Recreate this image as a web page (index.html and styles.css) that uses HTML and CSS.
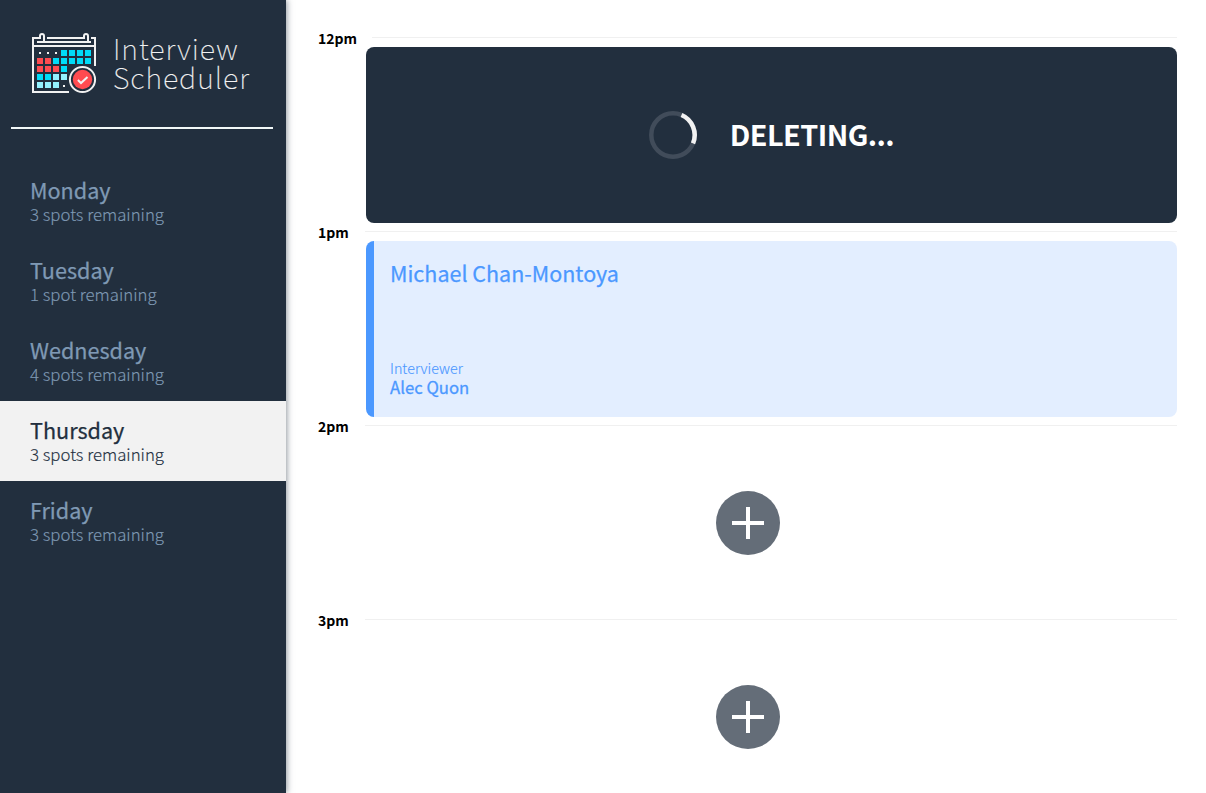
FILE: index.html
```
<!DOCTYPE html>
<html lang="en">
<head>
<meta charset="utf-8">
<title>Interview Scheduler</title>
<link rel="stylesheet" href="styles.css">
</head>
<body>
<div class="layout">
  <aside class="sidebar">
    <div class="brand">
      <svg class="brand-icon" width="70" height="66" viewBox="0 0 70 66">
        <g fill="none" stroke="#f2f2f2" stroke-width="2">
          <path d="M39 61H3V7H10M17 7H54M61 7H65V35M3 15H65M7 11H61"/>
          <path d="M10 8V5a2 2 0 0 1 4 0V11M54 8V5a2 2 0 0 1 4 0V11"/>
        </g>
        <path fill="#f2f2f2" d="M9 21h2v2H9zM17 21h2v2h-2zM25 21h2v2h-2zM33 54h2v2h-2z"/>
        <path fill="#00dcf8" d="M31 19h6v6h-6zM39 19h6v6h-6zM47 19h6v6h-6zM55 19h6v6h-6zM23 27h6v6h-6zM31 27h6v6h-6zM39 27h6v6h-6zM47 27h6v6h-6zM55 27h6v6h-6zM31 35h6v6h-6zM7 43h6v6H7zM15 43h6v6h-6z"/>
        <path fill="#ff4b50" d="M7 27h6v6H7zM15 27h6v6h-6zM7 35h6v6H7zM15 35h6v6h-6zM23 35h6v6h-6z"/>
        <path fill="#94f2ff" d="M23 43h6v6h-6zM31 43h6v6h-6zM7 51h6v6H7zM15 51h6v6h-6zM23 51h6v6h-6z"/>
        <circle cx="52.500" cy="48.500" r="12.600" fill="#222f3e" stroke="#f2f2f2" stroke-width="2"/>
        <circle cx="52.500" cy="48.500" r="9.700" fill="#ff4b50"/>
        <path d="M47.900 49l3.100 3 6.500-6" fill="none" stroke="#f2f2f2" stroke-width="2"/>
      </svg>
      <div class="brand-name"><div>Interview</div><div>Scheduler</div></div>
    </div>
    <hr class="divider">
    <nav class="days">
      <div class="day"><span class="day-name">Monday</span><span class="day-spots">3 spots remaining</span></div>
      <div class="day"><span class="day-name">Tuesday</span><span class="day-spots">1 spot remaining</span></div>
      <div class="day"><span class="day-name">Wednesday</span><span class="day-spots">4 spots remaining</span></div>
      <div class="day selected"><span class="day-name">Thursday</span><span class="day-spots">3 spots remaining</span></div>
      <div class="day"><span class="day-name">Friday</span><span class="day-spots">3 spots remaining</span></div>
    </nav>
  </aside>
  <main class="schedule">
    <section class="slot">
      <header class="slot-head"><span class="time wide">12pm</span><i class="line"></i></header>
      <div class="card status">
        <svg class="spinner" width="48" height="48" viewBox="0 0 48 48" fill="none" stroke-width="4.500">
          <circle cx="24" cy="24" r="21.700" stroke="#414c5a"/>
          <path d="M32.500 4A21.700 21.700 0 0 1 44 32.300" stroke="#f2f2f2"/>
        </svg>
        <span class="status-text">DELETING...</span>
      </div>
    </section>
    <section class="slot">
      <header class="slot-head"><span class="time">1pm</span><i class="line"></i></header>
      <div class="card booked">
        <span class="student">Michael Chan-Montoya</span>
        <div class="interviewer">
          <span class="interviewer-label">Interviewer</span>
          <span class="interviewer-name">Alec Quon</span>
        </div>
      </div>
    </section>
    <section class="slot">
      <header class="slot-head"><span class="time">2pm</span><i class="line"></i></header>
      <div class="empty">
        <svg width="64" height="64" viewBox="0 0 64 64"><circle cx="32" cy="32" r="32" fill="#646d78"/><path d="M16 32H48M32 16V48" stroke="#fff" stroke-width="4"/></svg>
      </div>
    </section>
    <section class="slot">
      <header class="slot-head"><span class="time">3pm</span><i class="line"></i></header>
      <div class="empty">
        <svg width="64" height="64" viewBox="0 0 64 64"><circle cx="32" cy="32" r="32" fill="#646d78"/><path d="M16 32H48M32 16V48" stroke="#fff" stroke-width="4"/></svg>
      </div>
    </section>
  </main>
</div>
</body>
</html>
```
FILE: styles.css
```
* { box-sizing: border-box; }
body { margin: 0; font-family: "Noto Sans CJK JP", "Noto Sans", sans-serif; background: #fff; overflow: hidden; }
svg { display: block; flex: none; }
.layout { display: flex; height: 793px; }
.sidebar { width: 286px; flex: none; background: #222f3e; box-shadow: 1px 0 6px rgba(34, 47, 62, .5); }
.brand { display: flex; height: 127px; padding: 31px 0 0 30px; }
.brand-name { margin: 2px 0 0 13px; font-size: 28.800px; font-weight: 100; line-height: 29px; letter-spacing: .95px; color: #f2f2f2; white-space: nowrap; -webkit-text-stroke: .15px currentColor; }
.divider { height: 2px; margin: 0 13px 32px 11px; border: 0; background: #f2f8f8; }
.day { display: flex; flex-direction: column; height: 80px; padding: 17px 30px 0; color: #7f99b4; }
.day-name { font-size: 21.600px; line-height: 24px; -webkit-text-stroke: .25px currentColor; }
.day-spots { font-size: 16.800px; line-height: 24px; font-weight: 300; -webkit-text-stroke: .15px currentColor; }
.selected { background: #f2f2f2; color: #222f3e; }
.schedule { flex: 1; padding: 29px 29px 0 32px; }
.slot { height: 194px; }
.slot-head { display: flex; height: 18px; }
.time { width: 47px; font-size: 14px; line-height: 18px; font-weight: 700; color: #000; }
.time.wide { width: 54px; }
.line { flex: 1; height: 1px; margin-top: 8px; background: #f0f0f0; }
.card { height: 176px; margin-left: 48px; border-radius: 8px; }
.status { display: flex; align-items: center; justify-content: center; gap: 33px; background: #222f3e; color: #fff; }
.status-text { margin-top: -2px; font-size: 28.800px; font-weight: 700; line-height: 36px; letter-spacing: -.55px; }
.booked { display: flex; flex-direction: column; justify-content: space-between; padding: 19px 16px 20px; border-left: 8px solid #4b98ff; background: #e3eeff; color: #4b98ff; }
.student { font-size: 21.500px; line-height: 26px; -webkit-text-stroke: .25px currentColor; }
.interviewer { display: flex; flex-direction: column; }
.interviewer-label { font-size: 14.300px; line-height: 18px; font-weight: 300; margin-top: -1px; padding-bottom: 1px; -webkit-text-stroke: .15px currentColor; }
.interviewer-name { font-size: 16.700px; line-height: 19px; -webkit-text-stroke: .3px currentColor; }
.empty { display: flex; justify-content: center; align-items: center; height: 176px; padding-left: 1px; }
```
